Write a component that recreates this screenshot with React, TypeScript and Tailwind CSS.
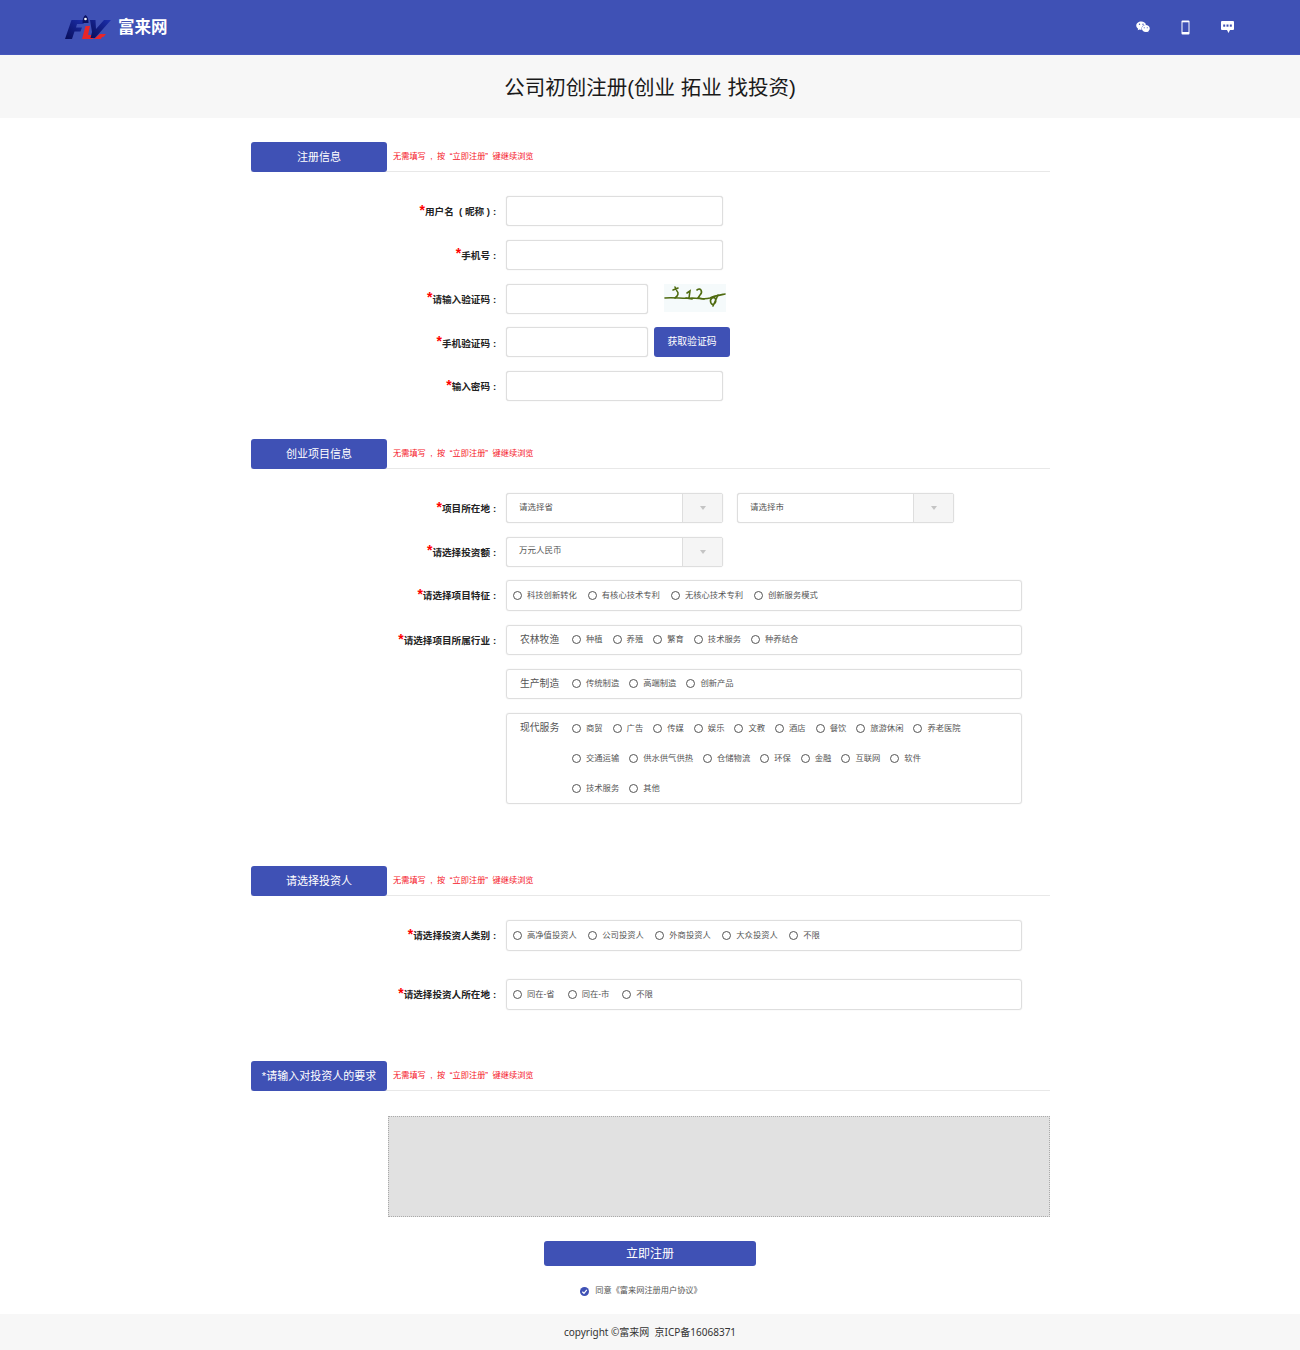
import React from "react";

const FONT = "font-['Liberation_Sans','Noto_Sans_CJK_SC',sans-serif]";
const FIELD = "border border-[#dedede] rounded-[3px] shadow-[0_0_1px_#cfcfcf]";

function Radio({ label }: { label: string }) {
  return (
    <span className="flex items-center">
      <span className="w-[9px] h-[9px] rounded-full border border-[#555] bg-white shrink-0" />
      <span className="ml-[5px] text-[8.3px] leading-none text-[#555] whitespace-nowrap">{label}</span>
    </span>
  );
}

function SectionHead({ title }: { title: string }) {
  return (
    <div className="flex items-center h-[30px] border-b border-[#e8e8e8]">
      <div className="w-[136px] h-[30px] -mb-px rounded-[3px] bg-[#3f51b5] text-white text-[11px] flex items-center justify-center shrink-0">
        {title}
      </div>
      <span className="ml-[6px] mt-[2px] text-[8.2px] text-[#f5141e] whitespace-pre">无需填写  ,  按  “立即注册”  键继续浏览</span>
    </div>
  );
}

function Label({ text }: { text: string }) {
  return (
    <div className="w-[246px] shrink-0 flex items-center justify-end h-[30px] mr-[9px] text-[9.600px] font-bold text-[#222] whitespace-pre">
      <span className="text-[#f00] text-[14px] font-bold leading-none -mt-[3px]">*</span>
      <span className="mt-[3px]">{text}</span>
      <span className="mt-[3px] ml-[3px] w-[4px]">:</span>
    </div>
  );
}

function TextInput({ w = "w-[217px]" }: { w?: string }) {
  return <input className={`${w} h-[30px] bg-white ${FIELD} outline-none`} />;
}

function Select({ text }: { text: string }) {
  return (
    <div className={`w-[217px] h-[30px] ${FIELD} flex items-stretch bg-white`}>
      <span className="flex-1 pl-[12px] pb-[2px] flex items-center text-[8.5px] text-[#555]">{text}</span>
      <span className="w-[40px] bg-[#f5f5f5] border-l border-[#dedede] flex items-center justify-center">
        <span className="w-0 h-0 border-x-[3.5px] border-x-transparent border-t-[4px] border-t-[#c4c4c4]" />
      </span>
    </div>
  );
}

function RadioBox({ items, gap = "gap-[11px]" }: { items: string[]; gap?: string }) {
  return (
    <div className={`w-[516px] h-[31px] ${FIELD} flex items-center ${gap} pl-[6px]`}>
      {items.map((i) => (
        <Radio key={i} label={i} />
      ))}
    </div>
  );
}

function CategoryBox({ name, rows, className = "h-[30px]" }: { name: string; rows: string[][]; className?: string }) {
  return (
    <div className={`w-[516px] ${className} ${FIELD} flex pl-[13px]`}>
      <span className="w-[52px] h-[30px] flex items-center text-[9.8px] text-[#555] shrink-0 -mt-px">{name}</span>
      <div className="flex flex-col -mt-px">
        {rows.map((r, idx) => (
          <div key={idx} className="h-[30px] flex items-center gap-[10px]">
            {r.map((i, k) => (
              <Radio key={k} label={i} />
            ))}
          </div>
        ))}
      </div>
    </div>
  );
}

function Logo() {
  return (
    <svg width="46" height="25" viewBox="0 0 46 25" className="shrink-0">
      <defs>
        <linearGradient id="fly" x1="0" y1="1" x2="1" y2="0">
          <stop offset="0" stopColor="#080d58" />
          <stop offset="1" stopColor="#1c2fae" />
        </linearGradient>
      </defs>
      <path d="M0 24 L6.500 5 H20 L18.500 9 H12 L11 12.500 H17 L15.500 16.500 H9.500 L7 24Z" fill="url(#fly)" />
      <path d="M17 24 L20.500 11 H25 L23 20 H29 L28 24Z" fill="#e8262a" />
      <path d="M25 5 H30.500 L31 14 L39 5 H46 L30 23 H25.500 L27 17Z" fill="url(#fly)" />
      <path d="M20.500 0 C22.500 1.500 23.500 4 23.500 8 H17.500 C17.500 4 18.500 1.500 20.500 0Z" fill="#0b1160" />
      <circle cx="20.500" cy="4" r="1.300" fill="#fff" />
      <path d="M29 24 L35 19 H41 L38.500 22 H37 L36 24Z" fill="#e8262a" />
    </svg>
  );
}

function Captcha() {
  return (
    <svg width="62" height="28" viewBox="0 0 62 28" className="ml-[16px] bg-[#f5fafb]">
      <g fill="none" stroke="#4f6b10" strokeWidth="1.600" strokeLinecap="round">
        <path d="M1 14 C10 13 20 15 28 14 C36 14 40 16 46 14 C50 12 56 11 61 10" />
        <path d="M11 3 L13 7 C15 9 14 12 11 14 M9 6 L14 4" />
        <path d="M23 9 L26 7 L25 14 M22 14 L28 15" />
        <path d="M33 6 C37 3 39 8 36 11 L34 14 L40 15" />
        <path d="M48 14 C52 12 53 18 50 20 C47 22 45 16 48 14 M54 11 L49 22" />
      </g>
    </svg>
  );
}

export default function App() {
  return (
    <div className={`${FONT} w-full bg-white`}>
      <header className="h-[55px] bg-[#3f51b5] flex items-center justify-between pl-[65px] pr-[66px] border-b border-[#4657bd]">
        <div className="flex items-center">
          <Logo />
          <span className="ml-[7px] text-white text-[16.500px] font-bold">富来网</span>
        </div>
        <div className="flex items-center gap-[31px]">
          <svg width="14" height="12" viewBox="0 0 28 24" fill="#fff">
            <path d="M10.500 1C4.900 1 .5 4.700 .5 9.200c0 2.600 1.400 4.700 3.800 6.400L3.400 18.500l3.400-1.700c1.200.3 2.300.5 3.700.5h.9c-.2-.7-.3-1.400-.3-2.100 0-4.300 3.700-7.700 8.300-7.700h.9C19.400 3.900 15.300 1 10.500 1z" />
            <path d="M27.500 15c0-3.700-3.700-6.800-7.900-6.800-4.400 0-7.900 3.100-7.900 6.800s3.500 6.800 7.900 6.800c.9 0 1.900-.2 2.800-.5l2.600 1.400-.7-2.300c1.900-1.400 3.200-3.300 3.200-5.400z" />
            <circle cx="7" cy="6.500" r="1.400" fill="#3f51b5" />
            <circle cx="14" cy="6.500" r="1.400" fill="#3f51b5" />
            <circle cx="16.500" cy="13.500" r="1.100" fill="#3f51b5" />
            <circle cx="22.500" cy="13.500" r="1.100" fill="#3f51b5" />
          </svg>
          <svg width="9" height="15" viewBox="0 0 9 15" fill="none">
            <rect x=".5" y=".5" width="8" height="14" rx="1" fill="#fff" />
            <rect x="1.500" y="2.300" width="6" height="9.700" fill="#3f51b5" />
          </svg>
          <svg width="13" height="12" viewBox="0 0 13 12" fill="#fff">
            <path d="M1 0 H12 a1 1 0 0 1 1 1 V8 a1 1 0 0 1-1 1 H9 L7.500 12 L6 9 H1 a1 1 0 0 1-1-1 V1 a1 1 0 0 1 1-1z" />
            <rect x="2.200" y="3.500" width="2" height="2.200" fill="#3f51b5" />
            <rect x="5.500" y="3.500" width="2" height="2.200" fill="#3f51b5" />
            <rect x="8.800" y="3.500" width="2" height="2.200" fill="#3f51b5" />
          </svg>
        </div>
      </header>

      <div className="h-[63px] pt-[3px] bg-[#f7f7f7] flex items-center justify-center text-[20.500px] text-[#1a1a1a]">
        公司初创注册(创业 拓业 找投资)
      </div>

      <main className="w-[799px] ml-[251px] pt-[24px]">
        <SectionHead title="注册信息" />
        <div className="mt-[24px] flex flex-col gap-[13.750px]">
          <div className="flex"><Label text="用户名  ( 昵称 )" /><TextInput /></div>
          <div className="flex"><Label text="手机号" /><TextInput /></div>
          <div className="flex"><Label text="请输入验证码" /><TextInput w="w-[142px]" /><Captcha /></div>
          <div className="flex">
            <Label text="手机验证码" />
            <TextInput w="w-[142px]" />
            <button className="ml-[6px] w-[76px] h-[30px] rounded-[3px] bg-[#3f51b5] text-white text-[9.800px]">获取验证码</button>
          </div>
          <div className="flex"><Label text="输入密码" /><TextInput /></div>
        </div>

        <div className="mt-[38px]"><SectionHead title="创业项目信息" /></div>
        <div className="mt-[24px] flex flex-col gap-[14px]">
          <div className="flex">
            <Label text="项目所在地" />
            <div className="flex gap-[14px]"><Select text="请选择省" /><Select text="请选择市" /></div>
          </div>
          <div className="flex -mt-[0.5px]"><Label text="请选择投资额" /><Select text="万元人民币" /></div>
          <div className="flex -mt-[0.5px]">
            <Label text="请选择项目特征" />
            <RadioBox items={["科技创新转化", "有核心技术专利", "无核心技术专利", "创新服务模式"]} />
          </div>
          <div className="flex">
            <Label text="请选择项目所属行业" />
            <CategoryBox name="农林牧渔" rows={[["种植", "养殖", "繁育", "技术服务", "种养结合"]]} />
          </div>
          <div className="flex pl-[255px]">
            <CategoryBox name="生产制造" rows={[["传统制造", "高端制造", "创新产品"]]} />
          </div>
          <div className="flex pl-[255px]">
            <CategoryBox
              name="现代服务"
              className="h-[91px]"
              rows={[
                ["商贸", "广告", "传媒", "娱乐", "文教", "酒店", "餐饮", "旅游休闲", "养老医院"],
                ["交通运输", "供水供气供热", "仓储物流", "环保", "金融", "互联网", "软件"],
                ["技术服务", "其他"],
              ]}
            />
          </div>
        </div>

        <div className="mt-[62px]"><SectionHead title="请选择投资人" /></div>
        <div className="mt-[24px] flex">
          <Label text="请选择投资人类别" />
          <RadioBox gap="gap-[11.500px]" items={["高净值投资人", "公司投资人", "外商投资人", "大众投资人", "不限"]} />
        </div>
        <div className="mt-[28px] flex">
          <Label text="请选择投资人所在地" />
          <RadioBox gap="gap-[13px]" items={["同在-省", "同在-市", "不限"]} />
        </div>

        <div className="mt-[51px]"><SectionHead title="*请输入对投资人的要求" /></div>
        <div className="mt-[25px] pl-[137px]">
          <textarea className="block w-[662px] h-[101px] bg-[#e1e1e1] border border-dotted border-[#aaa] outline-none resize-none" />
        </div>
      </main>

      <div className="mt-[24px] flex justify-center">
        <button className="w-[212px] h-[25px] rounded-[3px] bg-[#3f51b5] text-white text-[12px]">立即注册</button>
      </div>
      <div className="mt-[19px] h-[12px] flex items-center justify-center text-[8.200px] text-[#555] pr-[18px]">
        <svg width="9" height="9" viewBox="0 0 9 9" className="mr-[6px]">
          <circle cx="4.500" cy="4.500" r="4.500" fill="#3f51b5" />
          <path d="M2.300 4.700 L4 6.300 L6.800 2.900" stroke="#fff" strokeWidth="1.200" fill="none" />
        </svg>
        同意《富来网注册用户协议》
      </div>
      <footer className="mt-[17px] h-[36px] bg-[#f7f7f7] flex items-center justify-center font-['Noto_Sans','Noto_Sans_CJK_SC',sans-serif] text-[10px] text-[#333] whitespace-pre">
        copyright ©富来网  京ICP备16068371
      </footer>
    </div>
  );
}
